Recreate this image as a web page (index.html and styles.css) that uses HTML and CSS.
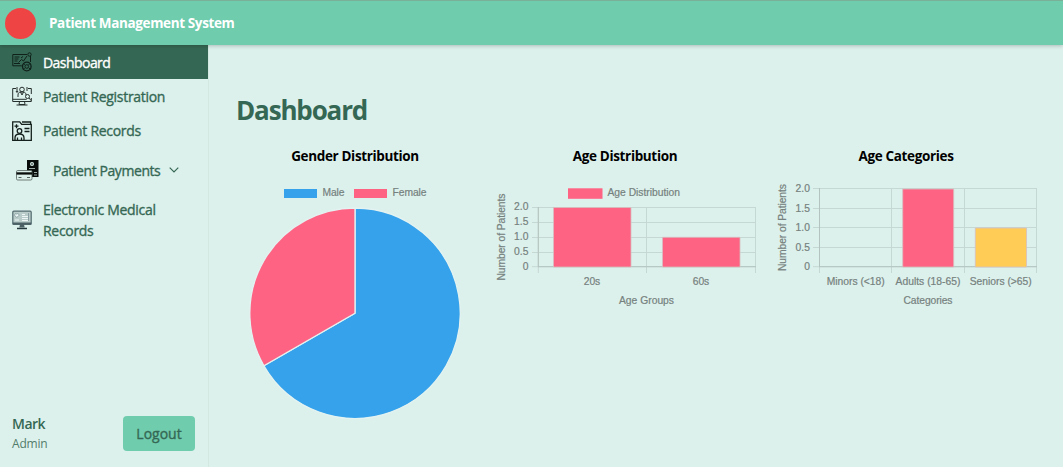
FILE: index.html
```html
<!DOCTYPE html>
<html lang="en">
<head>
<meta charset="utf-8">
<title>Patient Management System</title>
<link rel="stylesheet" href="styles.css">
</head>
<body>
<header class="topbar">
  <span class="logo"></span>
  <span class="brand">Patient Management System</span>
</header>
<div class="layout">
  <aside class="sidebar">
    <nav class="nav">
      <a class="item active">
        <svg class="icon" viewBox="0 0 20 20" fill="none" stroke="#10201b" stroke-width="1"><path d="M15 2.500H.8v11.300h9M2.500 5h5M2.500 7h4M2.500 9h3M6.500 10.500l3-3 2 1.500 3.500-5M9 6l2-1.500M2 11.500h6"/><circle cx="17.500" cy="2.500" r="1.700"/><path d="M18.500 4v6"/><circle cx="14.800" cy="14.500" r="4.300" stroke-width="1.300"/><circle cx="14.800" cy="14.500" r="1.800"/><path d="M11 18l1.500-2M18.600 18l-1.500-2M11 11.500l2 1M18.500 11.500l-2 1"/></svg>
        <span>Dashboard</span>
      </a>
      <a class="item">
        <svg class="icon" viewBox="0 0 20 20" fill="none" stroke="#26302d" stroke-width="1"><path d="M4 2.500H.7v13h18.600V12M16 2.500h3.300V8M.7 13.300h14M7.500 15.500l-.5 3h6l-.5-3M4.500 19h11"/><circle cx="10" cy="3.500" r="2.300"/><path d="M6 11V9c0-2 1-3 3-3h2c2 0 3 1 3 3M8.500 6l1.500 3 1.500-3M5 1v5M4 5l1 1.500L6 5M15 1v4"/><circle cx="15.500" cy="10.500" r="2"/><path d="M17 12l2 2.500"/></svg>
        <span>Patient Registration</span>
      </a>
      <a class="item">
        <svg class="icon" viewBox="0 0 20 20" fill="none" stroke="#14201c" stroke-width="1.300"><path d="M.7.8h7l2 2.500h9.600v16H.7zM10 1h8.600v2M4.500 3.200v4M2.500 5.200h4M12.500 7.500h5M12.500 10.500h5"/><circle cx="7.500" cy="10" r="2.300"/><path d="M3 19v-2c0-3 1.500-4 4.500-4s4.500 1 4.500 4v2M5.500 16.500V19M9.500 16.500V19"/></svg>
        <span>Patient Records</span>
      </a>
      <a class="item payments">
        <svg class="icon pay" viewBox="0 0 23 21"><path fill="#080d0b" d="M11 0h11.500v17h-6.500v-6h-5z"/><circle cx="16" cy="4" r="2" fill="#dcf0eb"/><circle cx="16" cy="4" r=".8" fill="#080d0b"/><path stroke="#dcf0eb" d="M13 8.500h6M18 12.500h3M18 15h3" stroke-width=".7"/><rect x=".5" y="10.500" width="15.500" height="9.500" rx="1.200" fill="#dcf0eb" stroke="#56625d" stroke-width=".8"/><path d="M.5 12.300h15.500v2.300H.5z" fill="#080d0b"/><path d="M2.500 17.500h3M11 17.500h3" stroke="#56625d"/></svg>
        <span>Patient Payments</span>
        <svg class="chevron" viewBox="0 0 10 6" fill="none" stroke="#356854" stroke-width="1.200"><path d="M.7.700 5 5 9.300.700"/></svg>
      </a>
      <a class="item records">
        <svg class="icon" viewBox="0 0 20 20"><rect x=".8" y="1.200" width="18.400" height="13.300" rx="1" fill="#b9ccca" stroke="#536b70" stroke-width="1.200"/><path d="M.8 12.500h18.400v2H.8zM8 14.500h4l.7 3H7.300z" fill="#4b6065"/><path d="M5 18.500h10" stroke="#25383e" stroke-width="1.500"/><path d="M4.800 7.500 2.700 5.300c0-2 1.500-2 2.100-1 .7-1 2.200-1 2.200 1z" fill="#eef8f7" stroke="#678087" stroke-width=".6"/><path d="M10 4.500h3M10 6.500h6M10 8.500h6M10 10.500h6M3 10h4" stroke="#edf6f5"/><path d="M16.500 3v8" stroke="#7c9298" stroke-width=".8"/></svg>
        <span>Electronic Medical<br>Records</span>
      </a>
    </nav>
    <div class="account">
      <div class="user"><div class="name">Mark</div><div class="role">Admin</div></div>
      <button class="logout">Logout</button>
    </div>
  </aside>
  <main class="main">
    <h1 class="title">Dashboard</h1>
    <div class="charts">
      <section class="card">
        <h2 class="heading">Gender Distribution</h2>
        <svg class="chart" viewBox="236 176 238 250">
          <rect x="284" y="189" width="33" height="9" fill="#36a2eb"/>
          <text x="322.500" y="196" textLength="22">Male</text>
          <rect x="354" y="189" width="33" height="9" fill="#ff6384"/>
          <text x="392.500" y="196" textLength="34">Female</text>
          <g stroke="#e3f3f1" stroke-width="1.300" stroke-linejoin="bevel">
            <path fill="#36a2eb" d="M355 313.200V208A105.200 105.200 0 1 1 263.900 365.800z"/>
            <path fill="#ff6384" d="M355 313.200 263.900 365.800A105.200 105.200 0 0 1 355 208z"/>
          </g>
        </svg>
      </section>
      <section class="card">
        <h2 class="heading">Age Distribution</h2>
        <svg class="chart" viewBox="494 176 262 250">
          <rect x="568" y="188.300" width="34.500" height="10.500" fill="#ff6384"/>
          <text x="607.500" y="196" textLength="72.500">Age Distribution</text>
          <path class="grid" d="M532 207.500H756M532 222.500H756M532 237.500H756M532 252.500H756M532 266.700H756M538.300 207V273M646.500 207V273M755.500 207V273"/>
          <path class="axis" d="M538.300 207V267M538 266.700H756"/>
          <path class="bar" fill="#ff6384" d="M553.500 267V207.500H631V267zM662.500 267V237.300H740V267z"/>
          <g text-anchor="end"><text x="528.500" y="210" textLength="14.500">2.0</text><text x="528.500" y="225" textLength="14.500">1.5</text><text x="528.500" y="240" textLength="14.500">1.0</text><text x="528.500" y="255" textLength="14.500">0.5</text><text x="528.500" y="270">0</text></g>
          <g text-anchor="middle"><text x="592" y="285" textLength="16.500">20s</text><text x="701" y="285" textLength="16.500">60s</text><text x="646.500" y="304" textLength="55">Age Groups</text>
          <text transform="translate(504.500 237) rotate(-90)" textLength="87">Number of Patients</text></g>
        </svg>
      </section>
      <section class="card">
        <h2 class="heading">Age Categories</h2>
        <svg class="chart" viewBox="775 176 262 250">
          <path class="grid" d="M813 188.500H1037M813 208.500H1037M813 227.500H1037M813 247.500H1037M813 266.700H1037M819.500 188V273M891.500 188V273M964.500 188V273M1036.500 188V273"/>
          <path class="axis" d="M819.500 188V267M819 266.700H1037"/>
          <path class="bar" fill="#ff6384" d="M902.700 267V189H953.700V267z"/>
          <path class="bar" fill="#ffcd56" d="M975.300 267V228H1026.500V267z"/>
          <g text-anchor="end"><text x="810" y="191.500" textLength="14.500">2.0</text><text x="810" y="211.500" textLength="14.500">1.5</text><text x="810" y="231" textLength="14.500">1.0</text><text x="810" y="250.500" textLength="14.500">0.5</text><text x="810" y="270">0</text></g>
          <g text-anchor="middle"><text x="855.700" y="285" textLength="58">Minors (&lt;18)</text><text x="928" y="285" textLength="65">Adults (18-65)</text><text x="1000.700" y="285" textLength="62">Seniors (&gt;65)</text><text x="928" y="304" textLength="49">Categories</text>
          <text transform="translate(786 227.500) rotate(-90)" textLength="87">Number of Patients</text></g>
        </svg>
      </section>
    </div>
  </main>
</div>
</body>
</html>
```
FILE: styles.css
```css
* { box-sizing: border-box; }
body {
  margin: 0;
  height: 467px;
  display: flex;
  flex-direction: column;
  overflow: hidden;
  background: #ddf1ec;
  font-family: "Open Sans", "Noto Sans", sans-serif;
  color: #356854;
}
.topbar {
  height: 45px;
  flex: none;
  display: flex;
  align-items: center;
  gap: 13px;
  padding-left: 5px;
  background: #6fccad;
  border-top: 1px solid #78b098;
  box-shadow: 0 1px 4px rgba(0, 0, 0, .22);
  z-index: 1;
}
.logo { width: 31px; height: 31px; border-radius: 50%; background: #ef4444; }
.brand { color: #fff; font-size: 13.5px; font-weight: 700; letter-spacing: -.37px; }
.layout { flex: 1; display: flex; min-height: 0; }
.sidebar {
  width: 209px;
  flex: none;
  display: flex;
  flex-direction: column;
  justify-content: space-between;
  border-right: 1px solid #d2e8e1;
}
.nav { display: flex; flex-direction: column; }
.item {
  height: 34.300px;
  display: flex;
  align-items: center;
  gap: 11px;
  padding-left: 12px;
  font-size: 14px;
  line-height: 21px;
  letter-spacing: -.3px;
  -webkit-text-stroke: .35px currentColor;
}
.active { background: #356854; color: #fff; letter-spacing: -.55px; }
.icon { width: 20px; height: 20px; flex: none; }
.payments { height: 45px; padding-left: 16px; gap: 14px; letter-spacing: -.42px; }
.pay { width: 23px; height: 21px; }
.chevron { width: 10px; height: 6px; margin-left: -5px; }
.records { height: 54px; }
.account {
  display: flex;
  justify-content: space-between;
  align-items: center;
  padding: 0 13px 13px 12px;
}
.name { font-size: 14px; font-weight: 600; line-height: 21px; letter-spacing: -.5px; }
.role { font-size: 12px; line-height: 20px; color: #527c6b; letter-spacing: -.2px; }
.logout {
  width: 72px;
  height: 35px;
  border: 0;
  border-radius: 4px;
  background: #6fccad;
  color: #356854;
  font: 400 14px "Open Sans", sans-serif;
  -webkit-text-stroke: .35px currentColor;
}
.main { flex: 1; padding: 46px 26px 0 27px; }
.title { margin: 0 0 16px; font-size: 26px; line-height: 38px; font-weight: 700; letter-spacing: -1.150px; }
.charts { display: grid; grid-template-columns: 238px 262px 262px; column-gap: 20px; }
.card:last-child { margin-left: -1px; margin-right: 1px; }
.heading { margin: 0; height: 31px; line-height: 23px; text-align: center; color: #000; font-size: 13.500px; font-weight: 700; letter-spacing: -.35px; }
.chart { display: block; width: 100%; height: 250px; overflow: visible; font-family: "Liberation Sans", Arial, sans-serif; font-size: 10.300px; fill: #75817e; }
.chart text { stroke: #75817e; stroke-width: .2px; }
.grid { fill: none; stroke: #c6d8d4; stroke-width: 1; }
.axis { fill: none; stroke: #b3c4bf; stroke-width: 1; }
.bar { stroke: #d7bfc0; stroke-width: .8; }
```
